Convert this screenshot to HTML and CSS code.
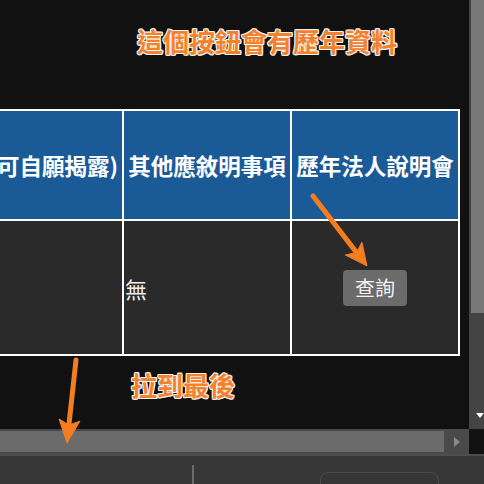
FILE: index.html
```html
<!DOCTYPE html>
<html lang="zh-Hant">
<head>
<meta charset="utf-8">
<link rel="stylesheet" href="styles.css">
</head>
<body>
<div class="screen">
  <div class="main">
    <div class="content">
      <div class="note note-top">這個按鈕會有歷年資料</div>
      <div class="grid">
        <div class="th th-cut">其他(可自願揭露)</div>
        <div class="th">其他應敘明事項</div>
        <div class="th">歷年法人說明會</div>
        <div class="td"></div>
        <div class="td td-left">無</div>
        <div class="td"><button class="btn">查詢</button></div>
      </div>
      <div class="note note-bottom">拉到最後</div>
    </div>
    <div class="vscroll">
      <div class="vthumb"></div>
      <div class="vspace"></div>
      <div class="vbtn"><span class="varrow"></span></div>
    </div>
  </div>
  <div class="hrow">
    <div class="hscroll">
      <div class="hthumb"></div>
      <div class="hbtn"><span class="harrow"></span></div>
    </div>
    <div class="corner"></div>
  </div>
  <div class="panel">
    <div class="panel-divider"></div>
    <div class="panel-box"></div>
  </div>
  <svg class="arrows" width="484" height="484" viewBox="0 0 484 484">
    <g fill="#f47d20" stroke="#f47d20">
      <line x1="313" y1="196" x2="356.6" y2="252.6" stroke-width="5" stroke-linecap="round"/>
      <polygon points="367,266 345.3,255 356.6,252.6 361.9,242.2" stroke-width="1" stroke-linejoin="round"/>
      <line x1="76" y1="360" x2="68.9" y2="425" stroke-width="5" stroke-linecap="round"/>
      <polygon points="67,443 59.1,419 68.9,425.1 79.9,421.2" stroke-width="1" stroke-linejoin="round"/>
    </g>
  </svg>
</div>
</body>
</html>
```

FILE: styles.css
```css
html, body {
  margin: 0;
  padding: 0;
  background: #111111;
}

body {
  width: 484px;
  height: 484px;
  overflow: hidden;
  font-family: "Noto Sans CJK TC", "Noto Sans", sans-serif;
}

.screen {
  position: relative;
  width: 484px;
  height: 484px;
  overflow: hidden;
  display: flex;
  flex-direction: column;
}

.main {
  display: flex;
  height: 429px;
}

.content {
  width: 469px;
  height: 429px;
  overflow: hidden;
  display: flex;
  flex-direction: column;
}

.note {
  font-size: 26px;
  line-height: 26px;
  height: 26px;
  font-weight: 700;
  color: #f5822a;
  white-space: nowrap;
  text-shadow:
    1px 0 #f4f4f4, -1px 0 #f4f4f4, 0 1px #f4f4f4, 0 -1px #f4f4f4,
    1px 1px #e8e8e8, -1px -1px #e8e8e8, 1px -1px #e8e8e8, -1px 1px #e8e8e8;
}

.note-top {
  margin-top: 28px;
  padding-left: 137px;
}

.note-bottom {
  margin-top: 16px;
  padding-left: 131px;
}

.grid {
  margin-top: 55px;
  margin-left: -130px;
  width: max-content;
  display: grid;
  grid-template-columns: 250px 166px 166px;
  grid-template-rows: 108px 133px;
  gap: 2px;
  padding: 2px;
  background: #ffffff;
}

.th {
  background: #1a5b97;
  color: #ffffff;
  font-weight: 700;
  font-size: 22.5px;
  white-space: nowrap;
  display: flex;
  align-items: center;
  justify-content: center;
  overflow: hidden;
}

.th-cut {
  justify-content: flex-end;
  padding-right: 4px;
}

.td {
  background: #2a2a2a;
  color: #eeeeee;
  font-size: 22px;
  display: flex;
  align-items: center;
  justify-content: center;
}

.td-left {
  justify-content: flex-start;
  padding-left: 1px;
}

.btn {
  width: 64px;
  height: 36px;
  margin-top: 1px;
  border: none;
  border-radius: 4px;
  background: #6b6b6b;
  color: #f2f2f2;
  font-family: "Noto Sans CJK TC", sans-serif;
  font-size: 20px;
  line-height: 36px;
  padding: 0;
}

.vscroll {
  width: 15px;
  height: 429px;
  background: #444444;
  display: flex;
  flex-direction: column;
}

.vthumb {
  margin-left: 2px;
  height: 313px;
  background: #787878;
}

.vspace {
  flex: 1;
}

.vbtn {
  height: 16px;
  padding-left: 7px;
}

.varrow {
  display: block;
  width: 0;
  height: 0;
  border-left: 4px solid transparent;
  border-right: 4px solid transparent;
  border-top: 5px solid #ffffff;
}

.hrow {
  display: flex;
  height: 25px;
}

.hscroll {
  width: 469px;
  background: #4a4a4a;
  display: flex;
  padding: 2px 0;
  box-sizing: border-box;
}

.hthumb {
  width: 444px;
  background: #6b6b6b;
}

.hbtn {
  flex: 1;
  display: flex;
  align-items: center;
  padding-left: 10px;
}

.harrow {
  display: block;
  width: 0;
  height: 0;
  border-top: 5.5px solid transparent;
  border-bottom: 5.5px solid transparent;
  border-left: 6px solid #8a8a8a;
}

.corner {
  width: 15px;
  background: #111111;
}

.panel {
  flex: 1;
  background: #373737;
  border-top: 2px solid #4e4e4e;
  display: flex;
  align-items: flex-start;
  padding-left: 192px;
  overflow: hidden;
}

.panel-divider {
  margin-top: 9px;
  width: 2px;
  height: 30px;
  background: #6a6a6a;
}

.panel-box {
  margin-left: 126px;
  margin-top: 16px;
  width: 117px;
  height: 30px;
  border: 1px solid #4b4b4b;
  border-radius: 8px 8px 0 0;
}

.arrows {
  position: absolute;
  top: 0;
  left: 0;
  pointer-events: none;
}
```
